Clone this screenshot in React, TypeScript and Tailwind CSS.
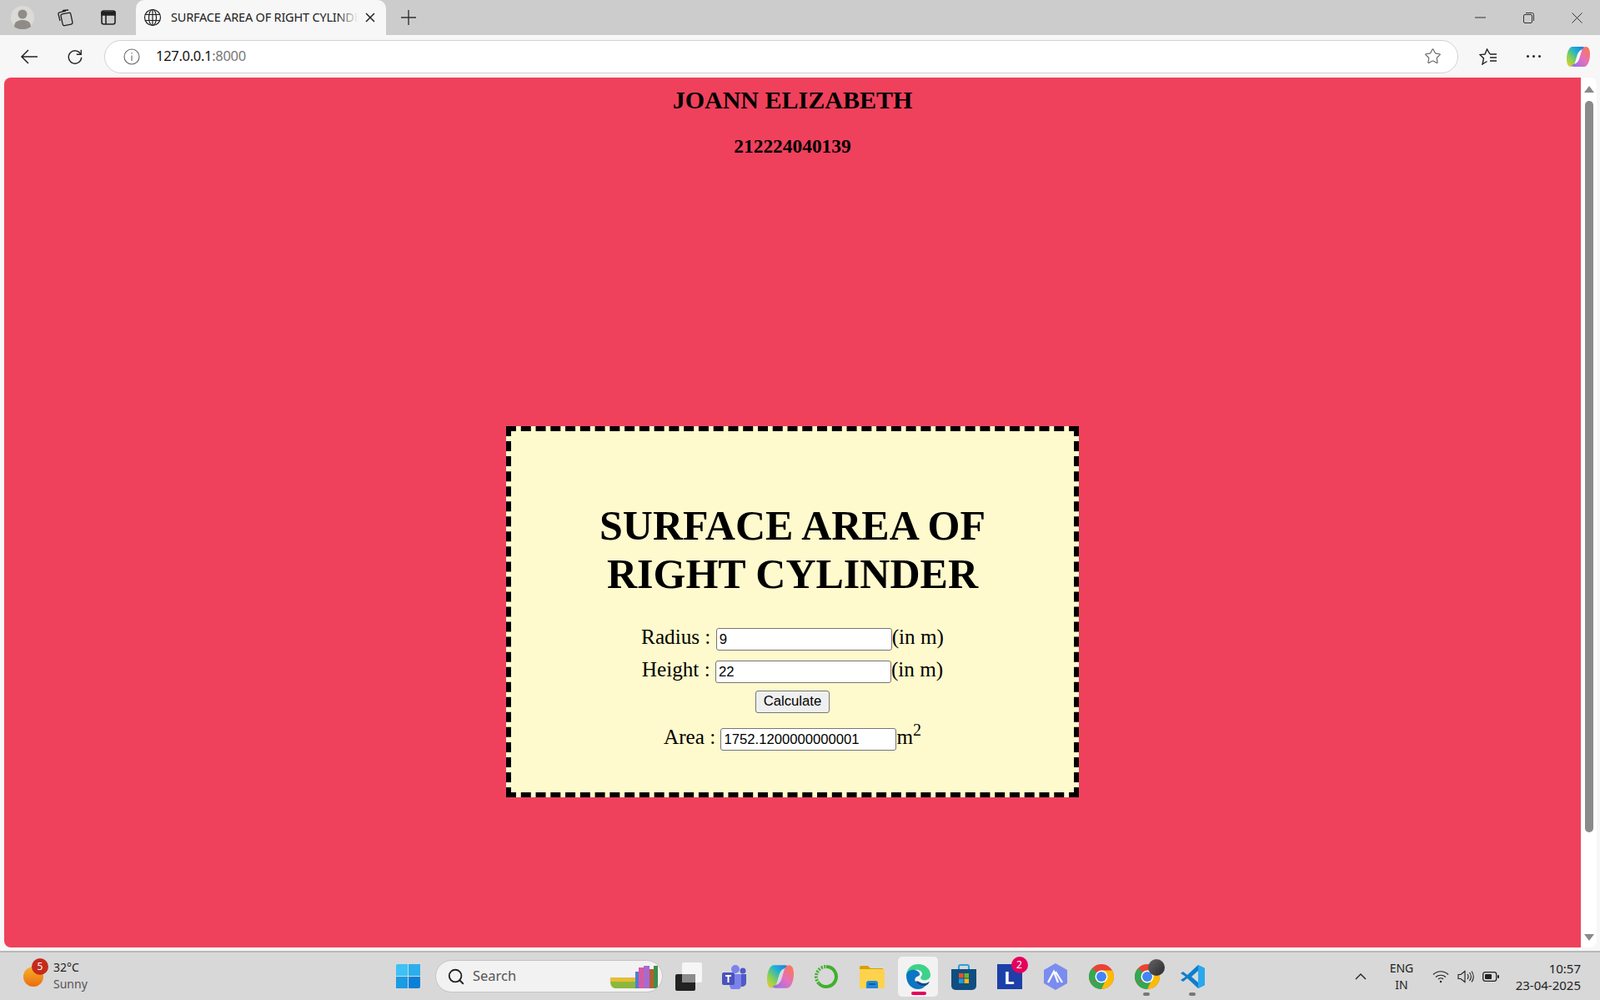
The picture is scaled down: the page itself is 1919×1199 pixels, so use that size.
import { Star, Search } from 'lucide-react'

const serif = "font-['Liberation_Serif','Times_New_Roman',serif]"
const inputClass =
  "w-[211px] h-[27px] border border-[#767676] rounded-[3px] bg-white px-[3px] text-[16.67px] text-black font-['Liberation_Sans',Arial,sans-serif] align-baseline"

function TabStrip() {
  return (
    <div className="flex h-[42px] shrink-0 items-center bg-[#cccccc]">
      <div className="flex w-[54px] justify-center">
        <svg width="28" height="28" viewBox="0 0 28 28">
          <circle cx="14" cy="14" r="14" fill="#dcdad6" />
          <circle cx="14" cy="10" r="5.5" fill="#8f8c87" />
          <path d="M4 25c0-6 5-8 10-8s10 2 10 8c-3 2.500-7 3-10 3s-7-.5-10-3z" fill="#8f8c87" />
        </svg>
      </div>
      <div className="flex w-[47px] justify-center">
        <svg width="22" height="22" viewBox="0 0 22 22" fill="none" stroke="#222" strokeWidth="1.3">
          <rect x="7" y="6" width="12" height="14" rx="2" transform="rotate(-12 13 13)" />
          <path d="M5 15 3 7c-.3-1 .3-2 1.300-2.200L12 3" />
          <path d="M8 3.500 9 2.500l6-.5" />
        </svg>
      </div>
      <div className="flex w-[58px] justify-center">
        <svg width="20" height="20" viewBox="0 0 20 20" fill="none" stroke="#222" strokeWidth="1.6">
          <rect x="2" y="2" width="16" height="16" rx="2.500" />
          <path d="M2 3.500h16V7H2z" fill="#222" />
          <path d="M7 7v11" />
        </svg>
      </div>
      <div className="ml-[4px] flex h-[42px] w-[300px] items-center self-end rounded-t-[10px] bg-[#f7f7f7] pl-[9px] pr-[10px]">
        <svg width="22" height="22" viewBox="0 0 22 22" fill="none" stroke="#222" strokeWidth="1.2">
          <circle cx="11" cy="11" r="9.500" />
          <ellipse cx="11" cy="11" rx="4.500" ry="9.500" />
          <path d="M2 7.500h18M2 14.500h18M11 1.500v19" />
        </svg>
        <span className="relative ml-[11px] w-[224px] overflow-hidden whitespace-nowrap font-['Noto_Sans',sans-serif] text-[14.5px] tracking-[-0.2px] text-[#222]">
          SURFACE AREA OF RIGHT CYLINDER
          <span className="absolute right-0 top-0 h-full w-[24px] bg-gradient-to-r from-transparent to-[#f7f7f7]" />
        </span>
        <svg className="ml-[9px]" width="12" height="12" viewBox="0 0 12 12" stroke="#222" strokeWidth="1.500">
          <path d="M1 1l10 10M11 1 1 11" />
        </svg>
      </div>
      <div className="ml-[15px] flex w-[24px] justify-center">
        <svg width="20" height="20" viewBox="0 0 20 20" stroke="#333" strokeWidth="1.400">
          <path d="M10 1v18M1 10h18" />
        </svg>
      </div>
      <div className="ml-auto flex items-center pr-[21px]">
        <svg className="mr-[45px]" width="13" height="2" viewBox="0 0 13 2" stroke="#333">
          <path d="M0 1h13" />
        </svg>
        <svg className="mr-[45px]" width="13" height="13" viewBox="0 0 13 13" fill="none" stroke="#333">
          <rect x=".5" y="2.500" width="10" height="10" rx="1.500" />
          <path d="M3 .5h7.500a2 2 0 0 1 2 2V10" />
        </svg>
        <svg width="13" height="13" viewBox="0 0 13 13" stroke="#333">
          <path d="M.5.5l12 12M12.500.5l-12 12" />
        </svg>
      </div>
    </div>
  )
}

function CopilotMark({ size }: { size: number }) {
  return (
    <svg width={size} height={size} viewBox="0 0 28 28">
      <defs>
        <linearGradient id="cpa" x1="1" y1="0" x2="0" y2="1">
          <stop offset="0" stopColor="#2a6fe0" />
          <stop offset=".35" stopColor="#19b0d8" />
          <stop offset=".7" stopColor="#8fd34a" />
          <stop offset="1" stopColor="#f5c733" />
        </linearGradient>
        <linearGradient id="cpb" x1="1" y1="0" x2="0" y2="1">
          <stop offset="0" stopColor="#8d6ff0" />
          <stop offset=".5" stopColor="#e46fc0" />
          <stop offset="1" stopColor="#ff7a3c" />
        </linearGradient>
      </defs>
      <path d="M7 2h12c2 0 3 1 3 2l-5 2c-2 1-3 3-4 5l-3 10c-1 3-3 5-5 5-3 0-5-3-5-9C0 9 3 2 7 2z" fill="url(#cpa)" />
      <path d="M7 2h12c2 0 3 1 3 2l-5 2c-2 1-3 3-4 5l-3 10c-1 3-3 5-5 5-3 0-5-3-5-9C0 9 3 2 7 2z" fill="url(#cpb)" transform="rotate(180 14 14)" />
    </svg>
  )
}

function Toolbar() {
  return (
    <div className="flex h-[51px] shrink-0 items-center bg-[#f7f7f7]">
      <div className="flex w-[70px] justify-center">
        <svg width="22" height="20" viewBox="0 0 22 20" fill="none" stroke="#222" strokeWidth="1.500">
          <path d="M21 10H2M10 2l-8 8 8 8" />
        </svg>
      </div>
      <div className="ml-[10px] flex w-[20px] justify-center">
        <svg width="22" height="22" viewBox="0 0 22 22" fill="none" stroke="#222" strokeWidth="1.500">
          <path d="M18.500 7.500A8.500 8.500 0 1 0 19.500 12" />
          <path d="M19 2v6h-6" />
        </svg>
      </div>
      <div className="ml-[25px] flex h-[40px] w-[1624px] items-center rounded-full border border-[#d2d2d2] bg-white pl-[22px]">
        <svg width="20" height="20" viewBox="0 0 20 20" fill="none" stroke="#666" strokeWidth="1.100">
          <circle cx="10" cy="10" r="9" />
          <path d="M10 8.500V15M10 5v1.500" />
        </svg>
        <span className="ml-[19px] font-['Noto_Sans',sans-serif] text-[16.500px] tracking-[-0.3px] text-[#111]">
          127.0.0.1<span className="text-[#777]">:8000</span>
        </span>
        <Star className="ml-auto mr-[19px]" size={21} strokeWidth={1.300} color="#666" />
      </div>
      <div className="ml-[22px] flex w-[28px] justify-center">
        <svg width="22" height="20" viewBox="0 0 22 20" fill="none" stroke="#222" strokeWidth="1.400">
          <path d="M13 7 9.500 1 7 7l-6 .5L5.500 12 4 19l5.500-3.500" />
          <path d="M13 7h8M13 11h8M13 15h8" />
        </svg>
      </div>
      <div className="ml-[26px] flex w-[28px] justify-center gap-[4px]">
        <span className="h-[3px] w-[3px] rounded-full bg-[#222]" />
        <span className="h-[3px] w-[3px] rounded-full bg-[#222]" />
        <span className="h-[3px] w-[3px] rounded-full bg-[#222]" />
      </div>
      <div className="ml-[26px] flex w-[28px] justify-center">
        <CopilotMark size={28} />
      </div>
    </div>
  )
}

function Card() {
  return (
    <div className={`mx-auto mt-[322px] h-[445px] w-[687px] border-[6px] border-dashed border-black bg-[#fffacd] pt-[84px] text-black ${serif}`}>
      <h1 className="text-center text-[50px] font-bold leading-[58px]">
        SURFACE AREA OF
        <br />
        RIGHT CYLINDER
      </h1>
      <div className="mt-[27px] text-center text-[25.200px] leading-[39px]">
        Radius : <input className={inputClass} defaultValue="9" />(in m)
      </div>
      <div className="text-center text-[25.200px] leading-[39px]">
        Height : <input className={inputClass} defaultValue="22" />(in m)
      </div>
      <div className="mt-[6px] flex justify-center">
        <button className="h-[27px] w-[89px] rounded-[3px] border border-[#767676] bg-[#efefef] font-['Liberation_Sans',Arial,sans-serif] text-[16.67px] leading-none text-black">
          Calculate
        </button>
      </div>
      <div className="mt-[9px] text-center text-[25.200px] leading-[39px]">
        Area : <input className={inputClass} defaultValue="1752.1200000000001" />m<sup className="text-[20px]">2</sup>
      </div>
    </div>
  )
}

function Page() {
  return (
    <div className="flex min-h-0 flex-1 pl-[5px] pr-[4px]">
      <main className={`h-[1043px] flex-1 overflow-hidden rounded-bl-[8px] rounded-tl-[8px] bg-[#ef415c] text-center text-black ${serif}`}>
        <h2 className="mt-[9px] text-[30px] font-bold leading-[36px]">JOANN ELIZABETH</h2>
        <h3 className="mt-[24px] text-[23.4px] font-bold leading-[27px]">212224040139</h3>
        <Card />
      </main>
      <div className="flex h-[1043px] w-[19px] flex-col items-center rounded-r-[8px] bg-white pt-[10px] pb-[8px]">
        <div className="h-0 w-0 border-x-[6px] border-b-[8px] border-x-transparent border-b-[#8a8a8a]" />
        <div className="mt-[10px] h-[877px] w-[10px] rounded-full bg-[#8a8a8a]" />
        <div className="mt-auto h-0 w-0 border-x-[6px] border-t-[8px] border-x-transparent border-t-[#8a8a8a]" />
      </div>
    </div>
  )
}

function AppSlot({ children, active, dot }: { children: React.ReactNode; active?: boolean; dot?: boolean }) {
  return (
    <div className="relative flex h-[48px] w-[55px] items-center justify-center">
      {active && <div className="absolute left-[4px] top-0 h-[48px] w-[48px] rounded-[5px] bg-[#f2f2f2]" />}
      <div className="relative flex">{children}</div>
      {active && <div className="absolute bottom-[2px] left-[20px] h-[4px] w-[18px] rounded-full bg-[#e6005c]" />}
      {dot && <div className="absolute bottom-[1px] left-[23px] h-[4px] w-[8px] rounded-full bg-[#777]" />}
    </div>
  )
}

function Chrome() {
  return (
    <svg width="30" height="30" viewBox="0 0 30 30">
      <circle cx="15" cy="15" r="15" fill="#ea4335" />
      <path d="M15 15 2 22.500A15 15 0 0 1 4 4.800z" fill="#34a853" />
      <path d="M2 22.500A15 15 0 0 0 15 30l7-15z" fill="#34a853" />
      <path d="M15 30a15 15 0 0 0 15-15c0-2.500-.5-5-2-7.500H15l7 7.500z" fill="#fbbc04" />
      <circle cx="15" cy="15" r="7.500" fill="#fff" />
      <circle cx="15" cy="15" r="6" fill="#4285f4" />
    </svg>
  )
}

function Taskbar() {
  return (
    <div className="flex h-[59px] shrink-0 items-center border-t-2 border-[#b9b9b9] bg-[#d8d8d8] font-['Noto_Sans',sans-serif]">
      <div className="flex w-[475px] items-center pl-[28px]">
        <div className="relative h-[24px] w-[24px] rounded-full bg-gradient-to-b from-[#f2b32c] to-[#ec6a0c]">
          <span className="absolute left-[10px] top-[-10px] flex h-[20px] w-[20px] items-center justify-center rounded-full bg-[#c42b1c] text-[12px] text-white">5</span>
        </div>
        <div className="ml-[12px] mt-[-2px] text-[14px] leading-[20px] text-[#222]">
          <div>32°C</div>
          <div className="text-[#555]">Sunny</div>
        </div>
      </div>
      <div className="grid h-[29px] w-[29px] grid-cols-2 gap-[1px]">
        <span className="rounded-tl-[2px] bg-[#3ec1f5]" />
        <span className="bg-[#2aaeee]" />
        <span className="bg-[#1a9be4]" />
        <span className="rounded-br-[2px] bg-[#0a80d8]" />
      </div>
      <div className="relative ml-[18px] flex h-[39px] w-[273px] items-center overflow-hidden rounded-full border border-[#c4c4c4] bg-[#f2f2f2] pl-[13px]">
        <Search size={22} strokeWidth={2} color="#222" />
        <span className="ml-[9px] text-[16.500px] text-[#555]">Search</span>
        <svg className="absolute right-0 top-[3px]" width="66" height="32" viewBox="0 0 66 32">
          <path d="M4 22h30v8H10c-4 0-6-4-6-8z" fill="#8bb83c" />
          <path d="M4 17h30v5H4z" fill="#e6bd3a" />
          <rect x="34" y="10" width="4" height="20" fill="#4a7fd8" />
          <rect x="38" y="5" width="6" height="25" fill="#d85aa0" />
          <rect x="44" y="3" width="7" height="27" fill="#a66ad0" />
          <rect x="51" y="7" width="5" height="23" fill="#b5602c" />
          <rect x="56" y="3" width="5" height="27" fill="#3f8f4c" />
        </svg>
      </div>
      <div className="ml-[3px] flex">
        <AppSlot>
          <svg width="32" height="34" viewBox="0 0 32 34">
            <rect x="0" y="14" width="24" height="20" rx="2" fill="#222" />
            <rect x="8" y="0" width="24" height="24" rx="2" fill="#f6f6f6" />
            <rect x="8" y="14" width="16" height="10" fill="#8c8c8c" />
          </svg>
        </AppSlot>
        <AppSlot>
          <svg width="30" height="30" viewBox="0 0 30 30">
            <circle cx="16" cy="6" r="5" fill="#7b83eb" />
            <circle cx="25" cy="8" r="3.500" fill="#5059c9" />
            <path d="M20 12h9v10a5 5 0 0 1-9 3z" fill="#5059c9" />
            <path d="M9 12h14v13a6 6 0 0 1-14 0z" fill="#7b83eb" />
            <rect x="0" y="10" width="15" height="15" rx="2" fill="#4b53bc" />
            <path d="M4 14h7M7.500 14v8" stroke="#fff" strokeWidth="2" />
          </svg>
        </AppSlot>
        <AppSlot>
          <CopilotMark size={32} />
        </AppSlot>
        <AppSlot>
          <svg width="30" height="30" viewBox="0 0 30 30" fill="none">
            <path d="M15 3a12 12 0 1 1-9 20" stroke="#3fb02c" strokeWidth="4" />
            <path d="M6 23A12 12 0 0 1 15 3" stroke="#3fb02c" strokeWidth="4" strokeDasharray="2 1.500" />
          </svg>
        </AppSlot>
        <AppSlot>
          <svg width="30" height="28" viewBox="0 0 30 28">
            <path d="M0 3a2 2 0 0 1 2-2h8l3 3h15v6H0z" fill="#d9a000" />
            <path d="M0 5h30v23H0z" fill="#ffd24d" />
            <path d="M8 22a3 3 0 0 1 3-3h8a3 3 0 0 1 3 3v6H8z" fill="#1e88d8" />
            <path d="M11 23h8" stroke="#0c4f90" strokeWidth="1.500" />
          </svg>
        </AppSlot>
        <AppSlot active>
          <svg width="30" height="32" viewBox="0 0 30 32">
            <path d="M15 1c9 0 15 6 15 13 0 5-5 7-9 6-4-1-3-4-1-6 1-4-4-7-9-6C6 9 2 12 1 15 1 7 7 1 15 1z" fill="#3cd28a" />
            <path d="M1 15c0-5 5-8 10-7 5 1 8 5 5 7-3 1-6 3-4 7 2 4 7 6 12 5-3 3-6 4-9 4C7 31 1 24 1 15z" fill="#0c75c4" />
            <path d="M12 22c2 4 7 6 12 5 2-1 4-3 5-5-3 2-8 3-11 1-2-1-4-2-6-1z" fill="#0b4c8c" />
          </svg>
        </AppSlot>
        <AppSlot>
          <svg width="30" height="32" viewBox="0 0 30 32">
            <path d="M9 7V4a2 2 0 0 1 2-2h8a2 2 0 0 1 2 2v3" fill="none" stroke="#2aa0dc" strokeWidth="2" />
            <path d="M0 7h30v20a5 5 0 0 1-5 5H5a5 5 0 0 1-5-5z" fill="#104e80" />
            <rect x="9" y="12" width="5.500" height="5.500" fill="#e8502a" />
            <rect x="15.500" y="12" width="5.500" height="5.500" fill="#6fb52c" />
            <rect x="9" y="18.500" width="5.500" height="5.500" fill="#1e9be0" />
            <rect x="15.500" y="18.500" width="5.500" height="5.500" fill="#f6b81a" />
          </svg>
        </AppSlot>
        <AppSlot>
          <div className="relative flex h-[30px] w-[30px] items-center justify-center bg-[#1c3fa8]">
            <span className="text-[22px] font-bold leading-none text-white">L</span>
            <span className="absolute right-[-7px] top-[-9px] flex h-[20px] w-[20px] items-center justify-center rounded-full bg-[#e6005c] text-[12px] text-white">2</span>
          </div>
        </AppSlot>
        <AppSlot>
          <svg width="28" height="32" viewBox="0 0 28 32" fill="none">
            <path d="M14 0 28 8v16l-14 8L0 24V8z" fill="#7a8cf0" />
            <path d="M5 23 12 10l5 13M14 10l8 13" stroke="#fff" strokeWidth="2.200" />
          </svg>
        </AppSlot>
        <AppSlot>
          <Chrome />
        </AppSlot>
        <AppSlot dot>
          <Chrome />
          <span className="absolute right-[-6px] top-[-6px] h-[20px] w-[20px] rounded-full bg-gradient-to-br from-[#666] to-[#2a2a2e]" />
        </AppSlot>
        <AppSlot dot>
          <svg width="30" height="30" viewBox="0 0 30 30">
            <path d="M21 1 8 13 3 9l-3 2 6 4-6 4 3 2 5-4 13 12 8-4V5z" fill="#0a7fcd" />
            <path d="M21 1v28l8-4V5z" fill="#29a8ee" />
            <path d="M21 8v14l-8-7z" fill="#d8d8d8" />
          </svg>
        </AppSlot>
      </div>
      <svg className="ml-[167px]" width="14" height="8" viewBox="0 0 14 8" fill="none" stroke="#222" strokeWidth="1.400">
        <path d="M1 7l6-6 6 6" />
      </svg>
      <div className="ml-[25px] w-[34px] text-center text-[14px] leading-[20px] text-[#222]">
        <div>ENG</div>
        <div>IN</div>
      </div>
      <svg className="ml-[20px]" width="20" height="16" viewBox="0 0 20 16" fill="none" stroke="#222" strokeWidth="1.200">
        <path d="M1 5.500c5-5 13-5 18 0M4 8.500c3.500-3 8.500-3 12 0M7 11c1.800-1.500 4.200-1.500 6 0" />
        <circle cx="10" cy="14" r="1.200" fill="#222" stroke="none" />
      </svg>
      <svg className="ml-[10px]" width="20" height="16" viewBox="0 0 20 16" fill="none" stroke="#222" strokeWidth="1.100">
        <path d="M1 5.500h3L9 1.500v13L4 10.500H1z" />
        <path d="M12 5c1.300 1.800 1.300 4.200 0 6M14.500 3c2.300 3 2.300 7 0 10M17 1.500c3 3.800 3 9.200 0 13" />
      </svg>
      <svg className="ml-[10px]" width="20" height="14" viewBox="0 0 20 14">
        <rect x=".7" y="1.700" width="16" height="10.600" rx="2.500" fill="none" stroke="#222" strokeWidth="1.300" />
        <rect x="3" y="4" width="8" height="6" rx="1" fill="#222" />
        <rect x="18" y="5" width="2" height="4" rx="1" fill="#222" />
      </svg>
      <div className="ml-auto pr-[23px] text-right text-[15px] leading-[20px] text-[#222]">
        <div>10:57</div>
        <div>23-04-2025</div>
      </div>
    </div>
  )
}

export default function App() {
  return (
    <div className="flex h-[1199px] w-[1919px] flex-col overflow-hidden bg-[#f7f7f7]">
      <TabStrip />
      <Toolbar />
      <Page />
      <Taskbar />
    </div>
  )
}
